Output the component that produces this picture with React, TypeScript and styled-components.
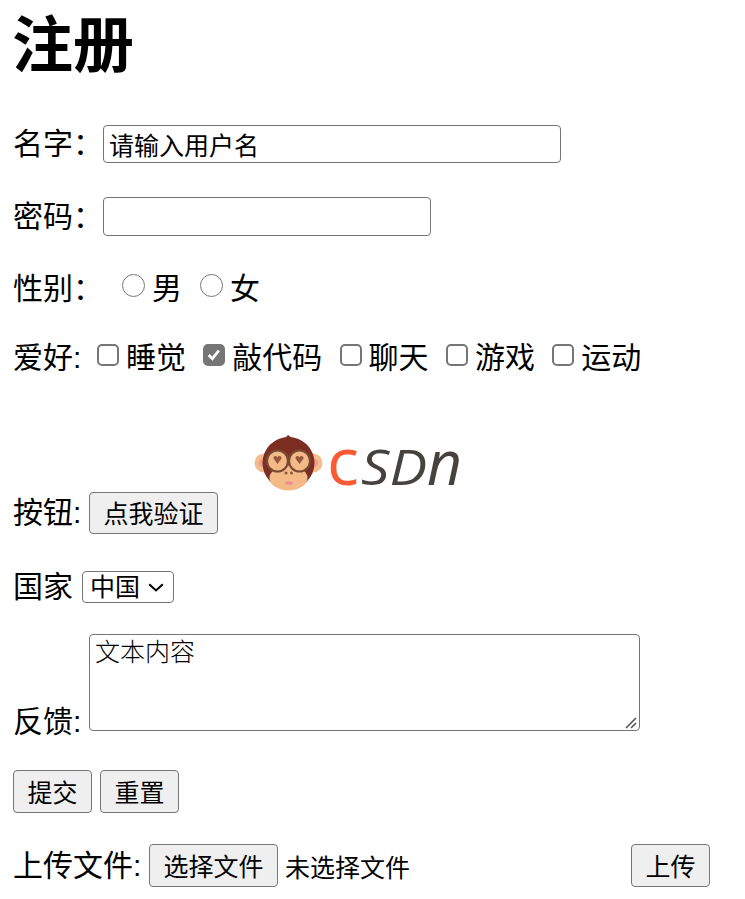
import styled, { createGlobalStyle } from 'styled-components';

const GlobalStyle = createGlobalStyle`
	html, body {
		margin: 0;
		background: #fff;
	}
	body {
		font-family: "Liberation Sans", "Noto Sans CJK SC", sans-serif;
		font-size: 30px;
		color: #000;
	}
`;

const HOBBIES = [
	{ name: '睡觉', checked: false },
	{ name: '敲代码', checked: true },
	{ name: '聊天', checked: false },
	{ name: '游戏', checked: false },
	{ name: '运动', checked: false },
];

const svgUrl = (body: string, box: string) =>
	`url("data:image/svg+xml,${encodeURIComponent(`<svg xmlns='http://www.w3.org/2000/svg' viewBox='${box}'>${body}</svg>`)}")`;

const tick = svgUrl("<path d='M4.5 11 L9 15.5 L17 5.5' fill='none' stroke='white' stroke-width='3.4'/>", '0 0 22 22');
const chevron = svgUrl("<path d='M1.2 1.2 L8 7.5 L14.8 1.2' fill='none' stroke='black' stroke-width='2'/>", '0 0 16 9');
const grip = svgUrl(
	"<path d='M1 11 L11 1 M6 11 L11 6' fill='none' stroke='#555' stroke-width='1.6'/>",
	'0 0 12 12'
);

const App = () => {
	return (
		<Page>
			<GlobalStyle />
			<Title>注册</Title>
			<Form onSubmit={(e) => e.preventDefault()}>
				<Row $top={45} $height={38}>
					<Label $width={90}>名字：</Label>
					<TextInput $width={458} type='text' defaultValue='请输入用户名' />
				</Row>
				<Row $top={34} $height={39}>
					<Label $width={90}>密码：</Label>
					<TextInput $width={328} type='password' />
				</Row>
				<Row $top={34} $height={34}>
					<Label $width={109} $drop={4}>
						性别：
					</Label>
					<Radio name='sex' />
					<Choice $drop={4}>男</Choice>
					<Radio name='sex' />
					<Choice $drop={4}>女</Choice>
				</Row>
				<Row $top={36} $height={34}>
					<Label $width={84} $drop={2}>
						爱好:
					</Label>
					{HOBBIES.map((hobby) => (
						<Hobby key={hobby.name}>
							<Check defaultChecked={hobby.checked} />
							<Choice $drop={2}>{hobby.name}</Choice>
						</Hobby>
					))}
				</Row>
				<LogoBox>
					<Logo />
				</LogoBox>
				<Row $height={42}>
					<Label $width={76}>按钮:</Label>
					<Button type='button'>点我验证</Button>
				</Row>
				<Row $top={37} $height={32}>
					<Label $width={69}>国家</Label>
					<CountrySelect defaultValue='cn'>
						<option value='cn'>中国</option>
					</CountrySelect>
				</Row>
				<FeedbackRow>
					<FeedbackLabel $width={76}>反馈:</FeedbackLabel>
					<Feedback defaultValue='文本内容' />
				</FeedbackRow>
				<Row $top={39} $height={43}>
					<Button type='submit'>提交</Button>
					<ResetButton type='reset'>重置</ResetButton>
				</Row>
				<Row $top={31} $height={43}>
					<Label $width={136}>上传文件:</Label>
					<Button type='button'>选择文件</Button>
					<FileName>未选择文件</FileName>
					<UploadButton type='button'>上传</UploadButton>
				</Row>
			</Form>
		</Page>
	);
};
export default App;

// the logo was a blurry bitmap, redrawn here on a 230x67 box
const Logo = () => (
	<LogoSvg width='230' height='67' viewBox='0 0 230 67'>
		<defs>
			<filter id='soft'>
				<feGaussianBlur stdDeviation='0.6' />
			</filter>
		</defs>
		<g filter='url(#soft)'>
			<circle cx='24' cy='38' r='9.5' fill='#f4bd8e' />
			<circle cx='73' cy='38' r='9.5' fill='#f4bd8e' />
			<circle cx='23' cy='38' r='4' fill='#ee9c8c' />
			<circle cx='74' cy='38' r='4' fill='#ee9c8c' />
			<path d='M44 14 L48 10 L53 14 Z' fill='#7c2f22' />
			<circle cx='48.5' cy='38' r='26' fill='#7c2f22' />
			<ellipse cx='48.5' cy='53' rx='19' ry='12.5' fill='#f3ba88' />
			<circle cx='37.5' cy='36' r='10.5' fill='#f3ba88' stroke='#7a4a32' strokeWidth='2.2' />
			<circle cx='59.5' cy='36' r='10.5' fill='#f3ba88' stroke='#7a4a32' strokeWidth='2.2' />
			<path d='M33.5 33.5 a2 2 0 0 1 4 -1 a2 2 0 0 1 4 1 l-4 5.5 z' fill='#95583e' />
			<path d='M55.5 33.5 a2 2 0 0 1 4 -1 a2 2 0 0 1 4 1 l-4 5.5 z' fill='#95583e' />
			<circle cx='46' cy='48' r='1.5' fill='#8a5a3c' />
			<circle cx='51.5' cy='48' r='1.5' fill='#8a5a3c' />
			<ellipse cx='49' cy='58' rx='4' ry='1.8' fill='#ef8f94' />
			<LogoText x='87' y='60' fontSize='66' fontWeight='500' fill='#fb5a34' textLength='32' lengthAdjust='spacingAndGlyphs'>
				c
			</LogoText>
			<LogoText x='121' y='60' fontSize='49' fontWeight='500' fill='#45433f' textLength='66' lengthAdjust='spacingAndGlyphs' fontStyle='italic'>
				SD
			</LogoText>
			<LogoText x='187' y='60' fontSize='62' fill='#45433f' textLength='35' lengthAdjust='spacingAndGlyphs' fontStyle='italic'>
				n
			</LogoText>
		</g>
	</LogoSvg>
);

const Page = styled.div`
	padding: 0 13px;
`;

const Title = styled.h1`
	margin: 0 0 0 -1px;
	padding-top: 11px;
	height: 80px;
	font-size: 61px;
	line-height: 70px;
	font-weight: 700;
	box-sizing: border-box;
`;

const Form = styled.form`
	display: flex;
	flex-direction: column;
`;

const Row = styled.div<{ $top?: number; $height: number }>`
	display: flex;
	align-items: center;
	margin-top: ${(props) => props.$top ?? 0}px;
	height: ${(props) => props.$height}px;
`;

const Label = styled.span<{ $width: number; $drop?: number }>`
	flex: none;
	width: ${(props) => props.$width}px;
	margin-top: ${(props) => props.$drop ?? 0}px;
	line-height: 34px;
	white-space: nowrap;
`;

const FeedbackLabel = styled(Label)`
	margin-bottom: -8px;
`;

const TextInput = styled.input<{ $width: number }>`
	box-sizing: border-box;
	width: ${(props) => props.$width}px;
	height: 100%;
	padding: 0 5px;
	border: 1px solid #767676;
	border-radius: 4px;
	font: inherit;
	font-size: 25px;
	color: #000;
`;

const Radio = styled.input.attrs({ type: 'radio' })`
	flex: none;
	appearance: none;
	box-sizing: border-box;
	width: 23px;
	height: 23px;
	margin: -4px 7px 0 0;
	background: #fff;
	border: 1.5px solid #767676;
	border-radius: 50%;
`;

const Check = styled.input.attrs({ type: 'checkbox' })`
	flex: none;
	appearance: none;
	box-sizing: border-box;
	width: 22px;
	height: 22px;
	margin: -4px 7px 0 0;
	background: #fff center / 100% no-repeat;
	border: 2px solid #767676;
	border-radius: 5px;

	&:checked {
		background-color: #767676;
		background-image: ${tick};
	}
`;

const Hobby = styled.label`
	display: flex;
	align-items: center;
	margin-right: 17.3px;
`;

const Choice = styled.span<{ $drop?: number }>`
	margin-top: ${(props) => props.$drop ?? 0}px;
	margin-right: 18px;
	line-height: 34px;
	${Hobby} & {
		margin-right: 0;
	}
`;

const LogoBox = styled.div`
	height: 67px;
	margin-top: 51px;
	padding-left: 227px;
`;

const LogoSvg = styled.svg`
	display: block;
	overflow: visible;
`;

const LogoText = styled.text`
	font-family: "Open Sans", sans-serif;
`;

const Button = styled.button`
	flex: none;
	box-sizing: border-box;
	height: 100%;
	padding: 0 13.5px 2px;
	background: #efefef;
	border: 1px solid #767676;
	border-radius: 4px;
	font: inherit;
	font-size: 25px;
	color: #000;
`;

const ResetButton = styled(Button)`
	margin-left: 8px;
`;

const UploadButton = styled(Button)`
	margin-left: auto;
	margin-right: 22px;
`;

const FileName = styled.span`
	margin-left: 7px;
	font-size: 25px;
`;

const CountrySelect = styled.select`
	appearance: none;
	box-sizing: border-box;
	width: 92px;
	height: 100%;
	padding: 0 7px;
	background: #fff ${chevron} right 9px center / 16px 9px no-repeat;
	border: 1px solid #767676;
	border-radius: 4px;
	font: inherit;
	font-size: 25px;
	color: #000;
`;

const FeedbackRow = styled.div`
	display: flex;
	align-items: flex-end;
	margin-top: 31px;
`;

// native grip is smaller than the one in the picture, so it is drawn instead
const Feedback = styled.textarea`
	box-sizing: border-box;
	width: 551px;
	height: 97px;
	margin: 0;
	padding: 3px 5px;
	background: #fff ${grip} right 2px bottom 1px / 12px 12px no-repeat;
	border: 1px solid #767676;
	border-radius: 4px;
	resize: none;
	font-family: "Liberation Serif", "Noto Sans CJK SC", serif;
	font-size: 25px;
	font-weight: 300;
	line-height: 30px;
	color: #000;
`;
